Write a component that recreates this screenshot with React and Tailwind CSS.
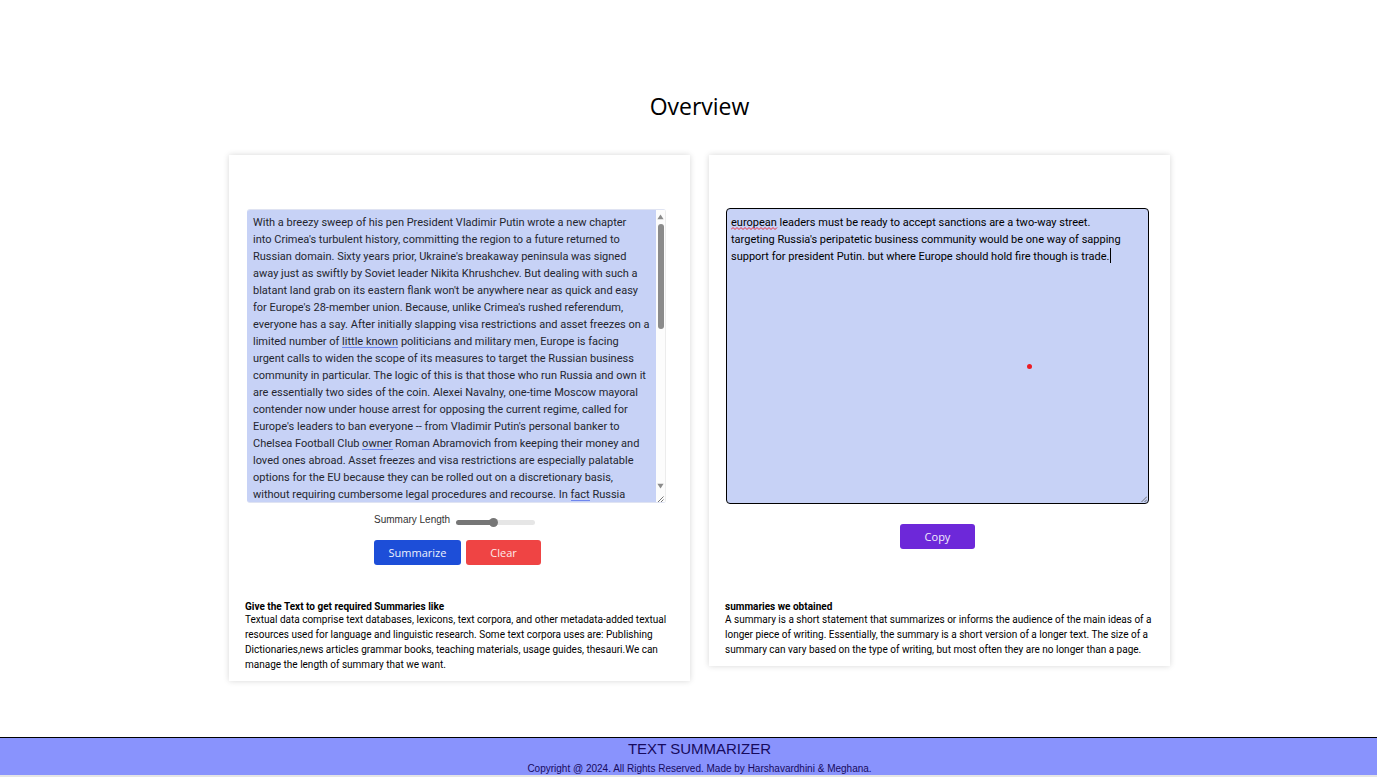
import React from "react";

const article = [
  "With a breezy sweep of his pen President Vladimir Putin wrote a new chapter",
  "into Crimea's turbulent history, committing the region to a future returned to",
  "Russian domain. Sixty years prior, Ukraine's breakaway peninsula was signed",
  "away just as swiftly by Soviet leader Nikita Khrushchev. But dealing with such a",
  "blatant land grab on its eastern flank won't be anywhere near as quick and easy",
  "for Europe's 28-member union. Because, unlike Crimea's rushed referendum,",
  "everyone has a say. After initially slapping visa restrictions and asset freezes on a",
  "limited number of little known politicians and military men, Europe is facing",
  "urgent calls to widen the scope of its measures to target the Russian business",
  "community in particular. The logic of this is that those who run Russia and own it",
  "are essentially two sides of the coin. Alexei Navalny, one-time Moscow mayoral",
  "contender now under house arrest for opposing the current regime, called for",
  "Europe's leaders to ban everyone -- from Vladimir Putin's personal banker to",
  "Chelsea Football Club owner Roman Abramovich from keeping their money and",
  "loved ones abroad. Asset freezes and visa restrictions are especially palatable",
  "options for the EU because they can be rolled out on a discretionary basis,",
  "without requiring cumbersome legal procedures and recourse. In fact Russia",
].join("\n");

const summary = [
  "european leaders must be ready to accept sanctions are a two-way street.",
  "targeting Russia's peripatetic business community would be one way of sapping",
  "support for president Putin. but where Europe should hold fire though is trade.",
].join("\n");

function Scrollbar() {
  return (
    <div aria-hidden="true" className="flex w-[10px] shrink-0 flex-col items-center border-r border-[#ececec] bg-[#fcfcfc] pt-1">
      <svg className="h-[6px] w-[7px]" viewBox="0 0 7 6"><path d="M3.5 .5 6.6 5.3H.4Z" fill="#8b8b8b" /></svg>
      <div className="mt-1 h-[105px] w-[6px] rounded-full bg-[#8b8b8b]" />
      <svg className="mt-auto h-[6px] w-[7px]" viewBox="0 0 7 6"><path d="M3.5 5.5 6.6 .7H.4Z" fill="#8b8b8b" /></svg>
      <svg className="mt-[7px] h-[6px] w-[7px]" viewBox="0 0 7 6"><path d="M1 6 6.5 .5M4 6 6.5 3.5" stroke="#777" strokeWidth="1" /></svg>
    </div>
  );
}

function Caption({ title, children }) {
  return (
    <div className="px-4 pb-[9px] font-[Roboto,'Open_Sans',sans-serif] text-[10px] text-black">
      <h2 className="leading-[11px] font-bold">{title}</h2>
      <p className="leading-[15px] whitespace-pre-line">{children}</p>
    </div>
  );
}

export default function App() {
  return (
    <div className="bg-white font-['Open_Sans','Noto_Sans',sans-serif] text-black">
      <main className="pt-[88px] pb-14 pl-[22px]">
        <h1 className="text-center text-[23px] leading-9">Overview</h1>
        <div className="mx-auto mt-[31px] grid max-w-[941px] grid-cols-2 items-start gap-[19px]">
          <section className="bg-white pt-[54px] shadow-[0_0_6px_rgba(0,0,0,0.16)]">
            <div className="mr-6 ml-[18px]">
              <div className="relative flex h-[294px] overflow-hidden rounded-[3px] border-y border-[#dfe3f2]">
                <textarea
                  aria-label="Text to summarize"
                  spellCheck={false}
                  defaultValue={article}
                  className="block min-w-0 grow resize-none overflow-hidden bg-[#c7d2f6] pt-1 pl-[6px] font-[Roboto,'Open_Sans',sans-serif] text-[11px] leading-[17px] whitespace-pre text-[#24262f] outline-none"
                />
                <Scrollbar />
                <span aria-hidden="true" className="absolute top-[137px] left-[95px] h-px w-[56px] bg-[#6f86ee]" />
                <span aria-hidden="true" className="absolute top-[239px] left-[115px] h-px w-[31px] bg-[#6f86ee]" />
                <span aria-hidden="true" className="absolute top-[290px] left-[324px] h-px w-[19px] bg-[#6f86ee]" />
              </div>
              <div className="mt-[10px] ml-[127px] flex flex-col gap-[14px]">
                <div className="flex h-[13px] items-center gap-[6px]">
                  <label htmlFor="length" className="font-['Liberation_Sans',sans-serif] text-[10px] leading-[13px] text-[#333]">Summary Length</label>
                  <input
                    id="length"
                    type="range"
                    min="0"
                    max="100"
                    defaultValue="47"
                    className="mt-[5px] h-[10px] w-[79px] appearance-none bg-transparent [&::-webkit-slider-runnable-track]:h-[5px] [&::-webkit-slider-runnable-track]:rounded-full [&::-webkit-slider-runnable-track]:bg-[linear-gradient(to_right,#767676_47%,#e6e6e6_47%)] [&::-webkit-slider-thumb]:-mt-[2px] [&::-webkit-slider-thumb]:size-[9px] [&::-webkit-slider-thumb]:appearance-none [&::-webkit-slider-thumb]:rounded-full [&::-webkit-slider-thumb]:bg-[#767676]"
                  />
                </div>
                <div className="flex gap-[5px]">
                  <button type="button" className="h-[25px] w-[87px] rounded-[3px] bg-[#1d4ed8] pt-px text-[11px] text-[#edf1fc]">Summarize</button>
                  <button type="button" className="h-[25px] w-[75px] rounded-[3px] bg-[#ef4444] pt-px text-[11px] text-[#fdeaea]">Clear</button>
                </div>
              </div>
            </div>
            <div className="mt-9">
              <Caption title="Give the Text to get required Summaries like">
                {"Textual data comprise text databases, lexicons, text corpora, and other metadata-added textual\nresources used for language and linguistic research. Some text corpora uses are: Publishing\nDictionaries,news articles grammar books, teaching materials, usage guides, thesauri.We can\nmanage the length of summary that we want."}
              </Caption>
            </div>
          </section>

          <section className="bg-white pt-[53px] shadow-[0_0_6px_rgba(0,0,0,0.16)]">
            <div className="mr-[21px] ml-[17px] flex flex-col items-center">
              <div className="relative w-full">
                <textarea
                  aria-label="Summary"
                  spellCheck={false}
                  defaultValue={summary}
                  className="block h-[296px] w-full resize-none overflow-hidden rounded-[4px] border border-black bg-[#c7d2f6] pt-[5px] pl-1 font-[Roboto,'Open_Sans',sans-serif] text-[11px] leading-[17px] whitespace-pre text-black outline-none"
                />
                <svg aria-hidden="true" className="absolute top-[19px] left-[5px] h-[3px] w-[47px]" viewBox="0 0 47 3" fill="none">
                  <path d="M0 2.5 2 .5 4 2.5 6 .5 8 2.5 10 .5 12 2.5 14 .5 16 2.5 18 .5 20 2.5 22 .5 24 2.5 26 .5 28 2.5 30 .5 32 2.5 34 .5 36 2.5 38 .5 40 2.5 42 .5 44 2.5 46 .5" stroke="#ee2b3b" />
                </svg>
                <span aria-hidden="true" className="absolute top-[40px] left-[384px] h-[15px] w-px bg-black" />
                <span aria-hidden="true" className="absolute top-[156px] left-[301px] size-[5px] rounded-full bg-[#ec1c24]" />
                <svg aria-hidden="true" className="absolute right-[2px] bottom-[2px] size-[6px]" viewBox="0 0 6 6"><path d="M.5 6 6 .5M3.5 6 6 3.5" stroke="#555" strokeWidth=".8" /></svg>
              </div>
              <button type="button" className="mt-5 h-[25px] w-[75px] rounded-[3px] bg-[#6d28d9] pt-px text-[11px] text-[#f3edfc]">Copy</button>
            </div>
            <div className="mt-[52px]">
              <Caption title="summaries we obtained">
                {"A summary is a short statement that summarizes or informs the audience of the main ideas of a\nlonger piece of writing. Essentially, the summary is a short version of a longer text. The size of a\nsummary can vary based on the type of writing, but most often they are no longer than a page."}
              </Caption>
            </div>
          </section>
        </div>
      </main>
      <footer className="border-t border-b-2 border-t-black border-b-[#e5e5e5] bg-[#8993fd] pl-[22px] text-center font-['Liberation_Sans',sans-serif] text-[#170b5e]">
        <p className="text-[15px] leading-[22px]">TEXT SUMMARIZER</p>
        <p className="pt-[3px] text-[10px] leading-[12px]">Copyright @ 2024. All Rights Reserved. Made by Harshavardhini &amp; Meghana.</p>
      </footer>
    </div>
  );
}
